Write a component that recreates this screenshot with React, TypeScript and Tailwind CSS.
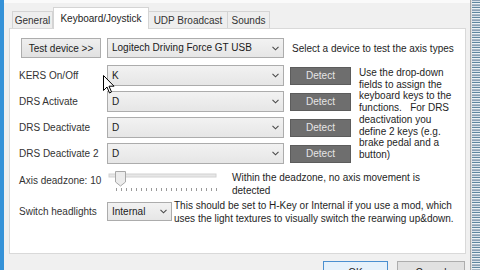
import React from "react";

const Chevron = () => (
  <svg width="7" height="5" viewBox="0 0 7 5" className="shrink-0">
    <path d="M0.5 0.8 L3.5 3.8 L6.5 0.8" fill="none" stroke="#4a4a4a" strokeWidth="1.1" />
  </svg>
);

function Select({ value, w, h }: { value: string; w: string; h: string }) {
  return (
    <div
      className={`${w} ${h} flex items-center justify-between pl-[4px] pr-[4px] border border-[#acacac] bg-[linear-gradient(#f2f2f2,#e6e6e6)] text-[#1a1a1a]`}
    >
      <span className="leading-none whitespace-nowrap">{value}</span>
      <Chevron />
    </div>
  );
}

function Detect() {
  return (
    <div className="ml-[6px] w-[61px] h-[18px] flex items-center justify-center bg-[#6e6e6e] border border-[#5c5c5c] text-[#e6e6e6] leading-none">
      Detect
    </div>
  );
}

function Slider() {
  const ticks: number[] = [];
  for (let i = 0; i <= 20; i++) ticks.push(9 + i * 5);
  return (
    <svg width="112" height="24" viewBox="0 0 112 24" className="shrink-0">
      <rect x="2" y="4" width="107" height="3" fill="#e7e7e7" stroke="#d2d2d2" strokeWidth="1" />
      <path d="M8.5 1.5 H18.5 V12 L13.5 16 L8.5 12 Z" fill="#ececec" stroke="#a8a8a8" strokeWidth="1" />
      {ticks.map((x) => (
        <line key={x} x1={x + 0.5} y1="18" x2={x + 0.5} y2="21" stroke="#9a9a9a" strokeWidth="1" />
      ))}
    </svg>
  );
}

function Row({ label, value }: { label: string; value: string }) {
  return (
    <div className="flex items-center h-[21px]">
      <div className="w-[88px] whitespace-nowrap text-[#333]">{label}</div>
      <Select value={value} w="w-[177px]" h="h-[21px]" />
      <Detect />
    </div>
  );
}

export default function App() {
  return (
    <div className="relative w-[480px] h-[270px] flex bg-[#f0f0f0] overflow-hidden font-['Liberation_Sans',Arial,sans-serif] text-[10px] text-[#1e1e1e]">
      <div className="w-[4px] shrink-0 bg-[#3592d8]" />
      <div className="w-[466px] shrink-0 flex flex-col">
        <div className="h-[28px] shrink-0 flex items-end pl-[8px] bg-[linear-gradient(#fafafa_0px,#fafafa_3px,#f0f0f0_3px)]">
          <div className="w-[41px] h-[17px] flex items-center justify-center border border-b-0 border-[#d4d4d4] bg-[#eeeeee] text-[#333]">
            General
          </div>
          <div className="relative z-10 -mb-px w-[96px] h-[22px] flex items-center justify-center border border-b-0 border-[#d4d4d4] bg-white">
            Keyboard/Joystick
          </div>
          <div className="w-[79px] h-[17px] flex items-center justify-center border border-b-0 border-l-0 border-[#d4d4d4] bg-[#eeeeee] text-[#333]">
            UDP Broadcast
          </div>
          <div className="w-[42px] h-[17px] flex items-center justify-center border border-b-0 border-l-0 border-[#d4d4d4] bg-[#eeeeee] text-[#333]">
            Sounds
          </div>
        </div>
        <div className="shrink-0 ml-[5px] w-[457px] h-[226px] bg-white border border-[#d9d9d9] pt-[9px] pl-[9px] flex flex-col">
          <div className="flex items-center h-[20px]">
            <div className="ml-[2px] w-[80px] h-[20px] flex items-center justify-center border border-[#adadad] bg-[linear-gradient(#efefef,#e1e1e1)] text-[#222] whitespace-nowrap">
              Test device &gt;&gt;
            </div>
            <div className="ml-[6px]">
              <Select value="Logitech Driving Force GT USB" w="w-[177px]" h="h-[20px]" />
            </div>
            <div className="ml-[8px] whitespace-nowrap">Select a device to test the axis types</div>
          </div>
          <div className="mt-[7px] flex">
            <div className="flex flex-col gap-[5px]">
              <Row label="KERS On/Off" value="K" />
              <Row label="DRS Activate" value="D" />
              <Row label="DRS Deactivate" value="D" />
              <Row label="DRS Deactivate 2" value="D" />
            </div>
            <div className="ml-[8px] mt-[2px] leading-[11.7px] whitespace-nowrap">
              Use the drop-down
              <br />
              fields to assign the
              <br />
              keyboard keys to the
              <br />
              functions.&nbsp;&nbsp; For DRS
              <br />
              deactivation you
              <br />
              define 2 keys (e.g.
              <br />
              brake pedal and a
              <br />
              button)
            </div>
          </div>
          <div className="mt-[6px] flex items-start h-[24px]">
            <div className="w-[88px] mt-[5px] leading-[12px] whitespace-nowrap text-[#333]">Axis deadzone: 10</div>
            <Slider />
            <div className="ml-[13px] mt-[1px] leading-[13px] whitespace-nowrap">
              Within the deadzone, no axis movement is
              <br />
              detected
            </div>
          </div>
          <div className="mt-[5px] flex items-start">
            <div className="w-[88px] mt-[7px] leading-[12px] whitespace-nowrap text-[#333]">Switch headlights</div>
            <div className="mt-[3px]">
              <Select value="Internal" w="w-[65px]" h="h-[19px]" />
            </div>
            <div className="ml-[2px] leading-[13px] whitespace-nowrap">
              This should be set to H-Key or Internal if you use a mod, which
              <br />
              uses the light textures to visually switch the rearwing up&amp;down.
            </div>
          </div>
        </div>
        <div className="shrink-0 mt-[7px] flex ml-[319px] gap-[9px]">
          <div className="w-[65px] h-[22px] flex items-center justify-center border border-[#4a8fd0] bg-[#e5f1fb] text-[#222]">
            OK
          </div>
          <div className="w-[68px] h-[22px] flex items-center justify-center border border-[#adadad] bg-[#e1e1e1] text-[#222]">
            Cancel
          </div>
        </div>
      </div>
      <div className="w-[1px] shrink-0 bg-[#a7a7a7]" />
      <div className="w-[1px] shrink-0 bg-[#e2e2e2]" />
      <div className="flex-1 bg-[repeating-linear-gradient(180deg,#8ea2b6_0px,#8ea2b6_1px,#d9e1e8_1px,#d9e1e8_2px,#5f879f_2px,#5f879f_3px,#eef2f5_3px,#eef2f5_4px,#a9b8c6_4px,#a9b8c6_5px)]" />
      <svg
        className="absolute left-[103px] top-[75px]"
        width="12"
        height="19"
        viewBox="0 0 12 19"
      >
        <path
          d="M0.5 0.5 V15.5 L4 12 L6.5 18 L8.5 17 L6 11.2 H11 Z"
          fill="#ffffff"
          stroke="#000000"
          strokeWidth="1"
          strokeLinejoin="round"
        />
      </svg>
    </div>
  );
}
